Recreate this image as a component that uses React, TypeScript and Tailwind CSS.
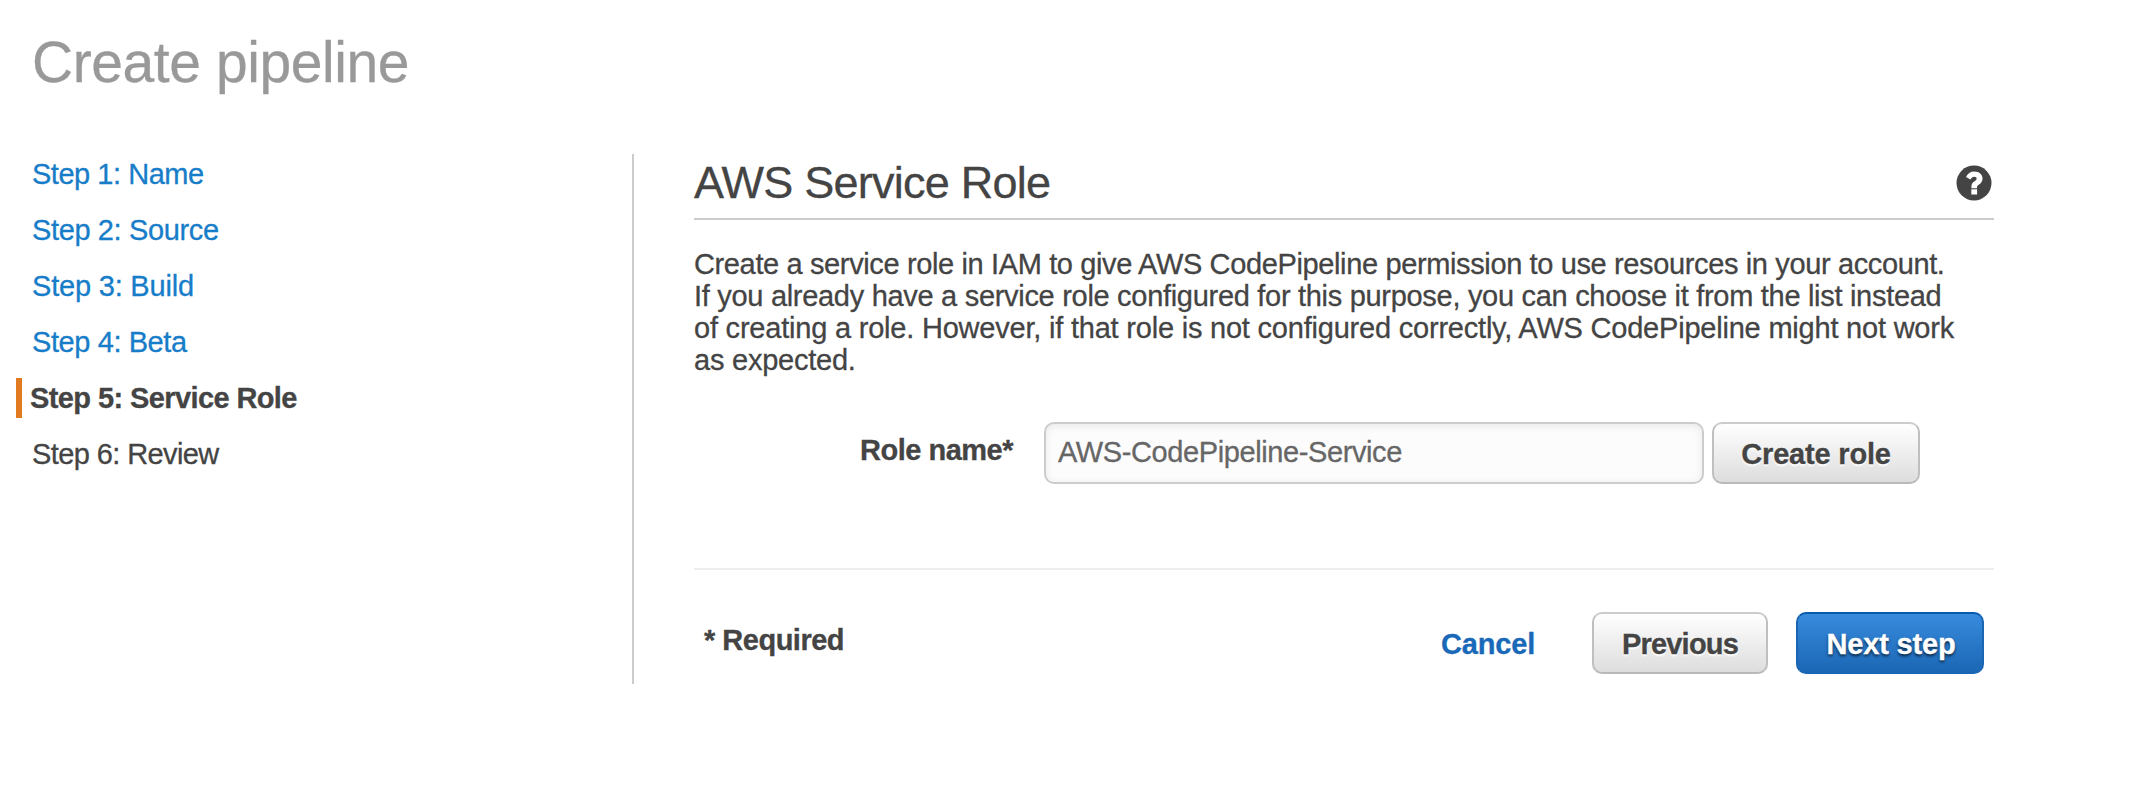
import React from "react";

const steps = [
  { label: "Step 1: Name", state: "done", tracking: "tracking-[-0.47px]" },
  { label: "Step 2: Source", state: "done", tracking: "tracking-[-0.37px]" },
  { label: "Step 3: Build", state: "done", tracking: "tracking-[-0.2px]" },
  { label: "Step 4: Beta", state: "done", tracking: "tracking-[-0.41px]" },
  { label: "Step 5: Service Role", state: "current", tracking: "tracking-[-0.6px]" },
  { label: "Step 6: Review", state: "todo", tracking: "tracking-[-0.6px]" },
];

function Step({ label, state, tracking }: { label: string; state: string; tracking: string }) {
  if (state === "current") {
    return (
      <li className={`flex h-10 items-center border-l-[6px] border-[#e07b22] pb-px pl-2 font-bold ${tracking}`}>
        {label}
      </li>
    );
  }
  return (
    <li className={`flex h-10 items-center pb-px pl-4 ${tracking}`}>
      {state === "done" ? (
        <a href="#" className="text-[#187dc8]">
          {label}
        </a>
      ) : (
        label
      )}
    </li>
  );
}

function HelpIcon() {
  return (
    <svg className="mt-[10.5px] mr-[2px] h-[36px] w-[36px]" viewBox="0 0 36 36" aria-label="Help">
      <circle cx="18" cy="18" r="17.5" fill="#444444" />
      <path
        d="M10 12.1C11.6 8.6 14.3 6.6 18.3 6.6C23 6.6 26.5 9.4 26.5 13.4C26.5 16.4 25.2 18 23 19.4C21.6 20.3 21 20.9 21 22.4V23.3H15.4V21.9C15.4 19 16.4 17.6 18.6 16.2C20 15.3 20.6 14.8 20.6 13.6C20.6 12.5 19.7 11.8 18.2 11.8C16.6 11.8 15.7 12.6 14.4 14.5Z"
        fill="#ffffff"
      />
      <rect x="15.3" y="24.3" width="5.8" height="5.2" fill="#ffffff" />
    </svg>
  );
}

const grayButton =
  "h-[62px] shrink-0 rounded-[10px] border-2 border-x-[#bfbfbf] border-t-[#cccccc] border-b-[#b9b9b9] bg-linear-to-b from-white to-[#dddddd] pt-px font-bold [text-shadow:0_2px_2px_#ffffff]";

export default function App() {
  return (
    <div className="min-h-[812px] w-[2144px] bg-white pt-[31px] font-['Liberation_Sans',Arial,sans-serif] text-[29px] leading-8 text-[#444444] [-webkit-text-stroke:0.3px_currentColor]">
      <h1 className="pl-8 text-[57px] leading-[62px] tracking-[-0.43px] text-[#999999]">Create pipeline</h1>
      <div className="mt-[61px] flex">
        <nav className="w-[632px] shrink-0 pl-4">
          <ul className="flex flex-col gap-4">
            {steps.map((s) => (
              <Step key={s.label} {...s} />
            ))}
          </ul>
        </nav>
        <main className="w-[1362px] border-l-2 border-[#cccccc] pb-[10px] pl-[60px]">
          <header className="flex h-[66px] justify-between border-b-2 border-[#cccccc]">
            <h2 className="pt-[5px] text-[45px] leading-[48px] tracking-[-0.76px]">AWS Service Role</h2>
            <HelpIcon />
          </header>
          <p className="mt-[28px] whitespace-nowrap">
            <span className="block tracking-[-0.37px]">
              Create a service role in IAM to give AWS CodePipeline permission to use resources in your account.
            </span>
            <span className="block tracking-[-0.3px]">
              If you already have a service role configured for this purpose, you can choose it from the list instead
            </span>
            <span className="block tracking-[-0.21px]">
              of creating a role. However, if that role is not configured correctly, AWS CodePipeline might not work
            </span>
            <span className="block tracking-[-0.23px]">as expected.</span>
          </p>
          <div className="mt-[46px] flex h-[62px]">
            <label htmlFor="role" className="w-[350px] shrink-0 pt-[12px] pr-[31px] text-right font-bold tracking-[-0.5px]">
              Role name*
            </label>
            <input
              id="role"
              defaultValue="AWS-CodePipeline-Service"
              className="h-[62px] w-[660px] shrink-0 rounded-[10px] border-2 border-[#cccccc] bg-[#fcfcfc] px-3 pb-[2px] tracking-[-0.4px] text-[#666666] shadow-[inset_0_2px_8px_rgba(0,0,0,0.08)]"
            />
            <button className={`${grayButton} ml-2 w-[208px] tracking-[-0.19px]`}>Create role</button>
          </div>
          <footer className="mt-[84px] flex border-t-2 border-[#eeeeee] pt-[42px]">
            <span className="grow pt-[12px] pl-[10px] font-bold tracking-[-0.5px]">* Required</span>
            <a href="#" className="pt-[16px] pr-[57px] font-bold tracking-[-0.2px] text-[#1a69b8]">
              Cancel
            </a>
            <button className={`${grayButton} w-[176px] tracking-[-0.8px]`}>Previous</button>
            <button className="mr-[10px] ml-7 h-[62px] w-[188px] shrink-0 rounded-[10px] border-2 border-x-[#1a66b3] border-t-[#0a5aac] border-b-[#1866b4] bg-linear-to-b from-[#388bdd] to-[#1a67b5] pt-px pl-[2px] font-bold tracking-[-0.17px] text-white [text-shadow:0_2px_3px_rgba(0,0,0,0.7)]">
              Next step
            </button>
          </footer>
        </main>
      </div>
    </div>
  );
}
